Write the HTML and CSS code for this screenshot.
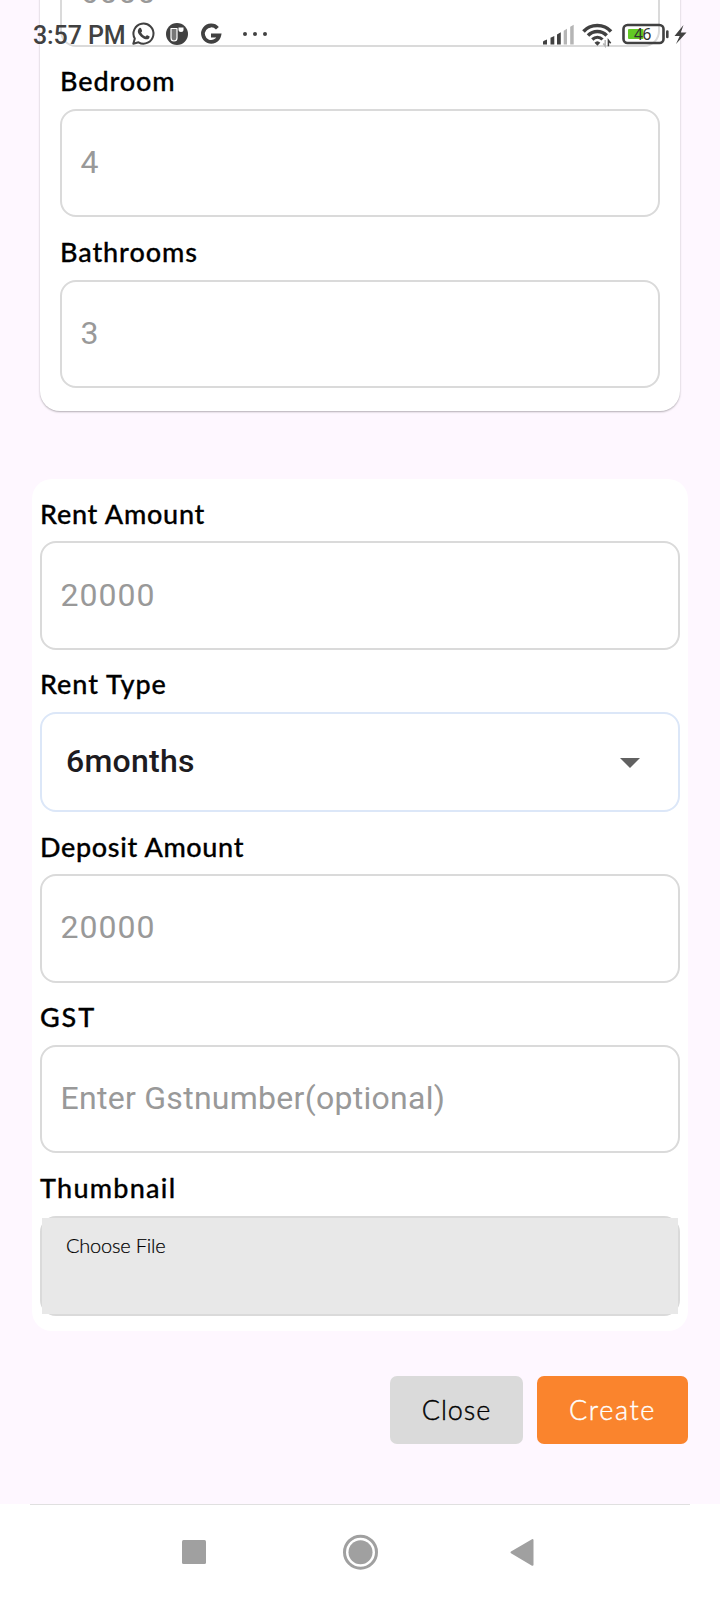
FILE: index.html
```
<!DOCTYPE html>
<html lang="en">
<head>
<meta charset="utf-8">
<title>Create rent</title>
<link rel="stylesheet" href="styles.css">
</head>
<body>
<div class="screen">
  <main class="content">
    <section class="card card-rooms">
      <div class="input">6000</div>
      <div class="label l-bedroom"><span>Bedroom</span></div>
      <div class="input">4</div>
      <div class="label l-bathrooms"><span>Bathrooms</span></div>
      <div class="input">3</div>
    </section>
    <section class="card card-rent">
      <div class="label l-rent"><span>Rent Amount</span></div>
      <div class="input">20000</div>
      <div class="label l-type"><span>Rent Type</span></div>
      <div class="select"><span>6months</span><svg width="20" height="10" viewBox="0 0 20 10"><path d="M0 0h20L10 10z" fill="#616161"/></svg></div>
      <div class="label l-deposit"><span>Deposit Amount</span></div>
      <div class="input">20000</div>
      <div class="label l-gst"><span>GST</span></div>
      <div class="input hint">Enter Gstnumber(optional)</div>
      <div class="label l-thumb"><span>Thumbnail</span></div>
      <div class="file"><div class="file-fill">Choose File</div></div>
    </section>
    <div class="actions">
      <div class="button close"><span>Close</span></div>
      <div class="button create"><span>Create</span></div>
    </div>
  </main>
  <nav class="navbar">
    <svg width="720" height="96" viewBox="0 0 720 96">
      <path d="M30 .5h660" stroke="#e0e0e0"/>
      <g fill="#a0a0a0">
        <rect x="182" y="36" width="24" height="24" rx="1.5"/>
        <circle cx="360.5" cy="48.2" r="12"/>
        <circle cx="360.5" cy="48.2" r="16" fill="none" stroke="#a0a0a0" stroke-width="3"/>
        <path d="M511.5 48.4L532.5 36v24.800z" stroke="#a0a0a0" stroke-width="2" stroke-linejoin="round"/>
      </g>
    </svg>
  </nav>
  <header class="status">
    <span class="time">3:57 PM</span>
    <svg class="status-icons" width="720" height="60" viewBox="0 0 720 60">
      <g fill="none" stroke="#414141" stroke-width="2">
        <path d="M133.300 43.800l1.500-5.200a10 10 0 1 1 3.700 3.700z" stroke-linejoin="round"/>
      </g>
      <path d="M139.200 28.200c1-.7 1.700-.3 2 .4l.9 2.100c.2.600-.6 1.200-1 1.800 1 2 2.400 3.200 4.300 4 .6-.5 1.100-1.500 1.800-1.300l2.200 1.100c.7.500-.2 2.200-1.100 2.700-1.600.8-3.700.2-5.800-1.200-2-1.300-3.900-3.500-4.500-5.300-.5-1.600.1-3.300 1.200-4.300z" fill="#414141"/>
      <circle cx="177" cy="34" r="11" fill="#414141"/>
      <path d="M171 28.500h6v9.500a3 3 0 0 1-6 0z" fill="#777" stroke="#fff" stroke-width="1.200" stroke-linejoin="round"/>
      <path d="M178.500 27.500h5v2a2.500 2.500 0 0 1-5 0z" fill="#fff"/>
      <path d="M217.400 28.300a8.200 8.200 0 1 0 1.800 7.200H211" fill="none" stroke="#414141" stroke-width="3.800"/>
      <g fill="#414141"><circle cx="245" cy="34" r="2"/><circle cx="255" cy="34" r="2"/><circle cx="265" cy="34" r="2"/></g>
      <g fill="#414141">
        <path d="M543 44.500v-2.600q0-.8 4-2.300v4.900zM550.500 44.500v-6.700l3.800-1.700v8.400zM557 44.500v-10l3.800-2.200v12.200z"/>
        <path d="M563.700 44.500V30.700l3.300-2v15.800zM570.200 44.500V26.800l3.500-2v19.700z" fill="#b5b5b5"/>
      </g>
      <g fill="none" stroke="#414141" stroke-width="3.500">
        <path d="M583.500 31.500c7-8 20.500-8 27.500 0"/>
        <path d="M588 35.500c5.200-5.300 13.500-5.300 18.700 0"/>
        <path d="M592.300 39.500c3-3 7.300-3 10.200 0" stroke-width="3.200"/>
      </g>
      <path d="M594.500 42.800c1.800-2 4-2 5.800 0l-2.900 3z" fill="#414141"/>
      <path d="M605.200 40v6l-2-2.500" fill="none" stroke="#b5b5b5" stroke-width="1.500"/>
      <path d="M608.400 46.300v-6l2.300 3" fill="none" stroke="#414141" stroke-width="1.500"/>
      <rect x="623.500" y="25" width="40" height="18" rx="4" fill="none" stroke="#414141" stroke-width="2.600"/>
      <rect x="628" y="29" width="15.500" height="10" rx="1" fill="#62c924"/>
      <path d="M667.300 31.500v5.500" stroke="#414141" stroke-width="2.600" stroke-linecap="round"/>
      <path d="M683.500 25l-9 11h5.200l-3.700 8 10.500-11.500h-5.700z" fill="#414141"/>
    </svg>
    <span class="battery">46</span>
  </header>
</div>
</body>
</html>
```
FILE: styles.css
```
* { box-sizing: border-box; }
body { margin: 0; }
.screen {
  position: relative;
  width: 720px;
  height: 1600px;
  overflow: hidden;
  background: #fef7ff;
  display: flex;
  flex-direction: column;
}
.content { height: 1504px; overflow: hidden; }
.card { background: #fff; border-radius: 20px; display: flow-root; }
.card-rooms {
  margin: 0 40px;
  margin-top: -61.5px;
  padding: 0 20px 23px;
  box-shadow: 0 1px 2px rgba(0, 0, 0, .3);
}
.card-rent { margin: 68.150px 32px 0; padding: 0 8px 15.150px; }
.label {
  height: 62.300px;
  padding: 18.600px 0 0;
  font: 500 27px/32px Lato, "Liberation Sans", sans-serif;
  -webkit-text-stroke: .3px #000;
  color: #000;
  white-space: nowrap;
}
.l-bedroom { letter-spacing: .900px; }
.l-bathrooms { letter-spacing: .900px; }
.l-rent { letter-spacing: .750px; }
.l-type { letter-spacing: .950px; }
.l-deposit { letter-spacing: .650px; }
.l-gst { letter-spacing: 1.900px; }
.l-thumb { letter-spacing: 1.250px; }
.input {
  height: 108.300px;
  border: 2px solid #dadada;
  border-radius: 16px;
  padding: 0 18.500px 2px;
  display: flex;
  align-items: center;
  font: 400 32px/40px Roboto, "Liberation Sans", sans-serif;
  letter-spacing: 1px;
  color: #999;
  white-space: nowrap;
}
.hint { letter-spacing: .280px; }
.select {
  height: 100px;
  border: 2px solid #dce7f8;
  border-radius: 16px;
  padding: 0 38px 2px 24px;
  display: flex;
  align-items: center;
  justify-content: space-between;
  font: 500 32px/40px Roboto, "Liberation Sans", sans-serif;
  letter-spacing: .250px;
  color: #1d1b20;
}
.select svg { margin-top: 4px; }
.file {
  height: 100px;
  border: 2px solid #dadada;
  border-radius: 16px;
}
.file-fill {
  height: 96px;
  background: #e8e8e8;
  padding: 14px 24px;
  font: 300 20px/26px Lato, "Liberation Sans", sans-serif;
  letter-spacing: -.2px;
  -webkit-text-stroke: .2px #000;
  color: #000;
}
.actions { display: flex; justify-content: flex-end; gap: 14px; padding: 45px 32px 0; }
.button {
  height: 68px;
  border-radius: 7px;
  display: flex;
  align-items: center;
  justify-content: center;
  font: 300 27px/32px Lato, "Liberation Sans", sans-serif;
  -webkit-text-stroke: .4px currentColor;
}
.close { width: 133px; background: #dadada; color: #000; letter-spacing: .900px; }
.create { width: 151px; background: #fa842d; color: #fff; letter-spacing: 1.600px; }
.navbar { height: 96px; background: #fff; }
.navbar svg { display: block; }
.status { position: absolute; left: 0; top: 0; width: 720px; height: 60px; }
.status-icons { position: absolute; left: 0; top: 0; }
.time {
  position: absolute;
  left: 33px;
  top: 21px;
  font: 500 25px/30px Roboto, sans-serif;
  letter-spacing: -.1px;
  color: #414141;
  white-space: nowrap;
}
.battery {
  position: absolute;
  left: 634px;
  top: 26px;
  font: 400 15.500px/17px "Noto Sans", sans-serif;
  letter-spacing: -.3px;
  color: #303030;
}
```
